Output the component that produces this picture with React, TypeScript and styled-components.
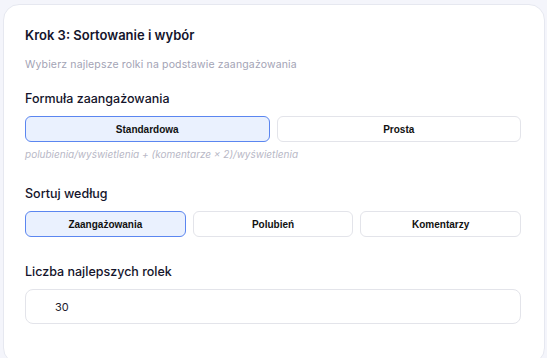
import styled, { createGlobalStyle } from "styled-components";

const GlobalStyle = createGlobalStyle`
  html, body {
    margin: 0;
    padding: 0;
    background: #f4f5fb;
  }
  body {
    font-family: Inter, "Noto Sans", sans-serif;
  }
`;

const Page = styled.div`
  padding: 4px 2px 0 3px;
  height: 358px;
  box-sizing: border-box;
  overflow: hidden;
`;

const Card = styled.div`
  background: #ffffff;
  border: 1px solid #e6e8f0;
  border-radius: 16px;
  padding: 21px 23px 30px 21px;
  min-height: 360px;
  box-sizing: border-box;
`;

const Title = styled.h2`
  margin: 0;
  font-size: 13px;
  font-weight: 600;
  color: #14142b;
  line-height: 18px;
`;

const Subtitle = styled.p`
  margin: 14px 0 0;
  font-size: 10.5px;
  color: #a3a3b5;
  line-height: 14px;
  letter-spacing: 0.15px;
`;

const Section = styled.div<{ $top: number }>`
  margin-top: ${(p) => p.$top}px;
`;

const Label = styled.div`
  font-size: 12.5px;
  font-weight: 500;
  color: #14142b;
  line-height: 16px;
  margin-bottom: 9px;
`;

const Options = styled.div<{ $cols: number }>`
  display: grid;
  grid-template-columns: repeat(${(p) => p.$cols}, 1fr);
  gap: 7px;
`;

const Option = styled.button<{ $active?: boolean }>`
  height: 26px;
  border-radius: 6px;
  border: 1px solid ${(p) => (p.$active ? "#5b86f0" : "#e3e4ea")};
  background: ${(p) => (p.$active ? "#eaf1fe" : "#ffffff")};
  font-family: "Liberation Sans", Arial, sans-serif;
  font-weight: 700;
  font-size: 10px;
  color: #111111;
  cursor: pointer;
  padding: 0;
`;

const Hint = styled.div`
  margin-top: 5px;
  font-size: 10px;
  font-style: italic;
  color: #b8b8c6;
  line-height: 14px;
`;

const NumberInput = styled.input`
  display: block;
  width: 100%;
  box-sizing: border-box;
  height: 35px;
  border: 1px solid #e3e4ea;
  border-radius: 8px;
  padding: 0 0 0 29px;
  font-family: Inter, "Noto Sans", sans-serif;
  font-size: 11px;
  color: #1c1c2e;
  outline: none;
`;

export default function App() {
  return (
    <Page>
      <GlobalStyle />
      <Card>
        <Title>Krok 3: Sortowanie i wybór</Title>
        <Subtitle>Wybierz najlepsze rolki na podstawie zaangażowania</Subtitle>

        <Section $top={19}>
          <Label>Formuła zaangażowania</Label>
          <Options $cols={2}>
            <Option $active>Standardowa</Option>
            <Option>Prosta</Option>
          </Options>
          <Hint>polubienia/wyświetlenia + (komentarze × 2)/wyświetlenia</Hint>
        </Section>

        <Section $top={25}>
          <Label>Sortuj według</Label>
          <Options $cols={3}>
            <Option $active>Zaangażowania</Option>
            <Option>Polubień</Option>
            <Option>Komentarzy</Option>
          </Options>
        </Section>

        <Section $top={27}>
          <Label>Liczba najlepszych rolek</Label>
          <NumberInput type="number" defaultValue={30} />
        </Section>
      </Card>
    </Page>
  );
}
